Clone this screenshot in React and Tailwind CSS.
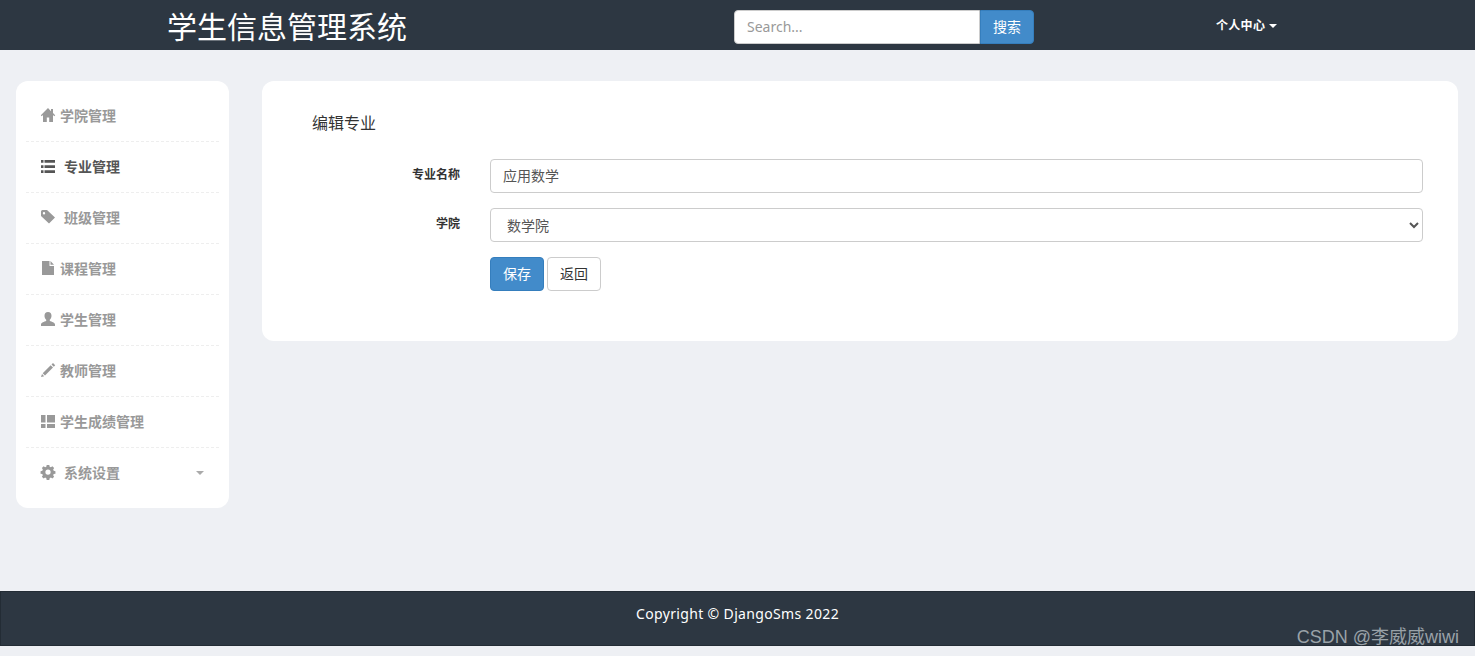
const I = ({ children }) => (
  <svg viewBox="0 1 16 16" className="w-4 h-4 shrink-0" fill="currentColor">{children}</svg>
);
const icons = {
  home: <I><path d="M8 1 .8 8.200l.9 1L3 8.100V15h3.800v-4.500h2.400V15H13V8.100l1.300 1.100.9-1L13 6V2h-2v2.200z" /></I>,
  list: <I><path d="M1 2h2.500v2.700H1zM4.500 2H15v2.700H4.500zM1 7.200h2.500v2.700H1zM4.500 7.200H15v2.700H4.500zM1 12.300h2.500V15H1zM4.500 12.300H15V15H4.500z" /></I>,
  tag: <I><path fillRule="evenodd" d="M2.500 1H7l8 7.500L9 14.500 1 7V2.500A1.500 1.500 0 0 1 2.500 1zM4 3a1.200 1.200 0 1 0 0 2.400A1.200 1.200 0 0 0 4 3z" /></I>,
  file: <I><path d="M2 1h7.500v5H14v9H2zM10.500 1 14 4.800h-3.500z" /></I>,
  user: <I><path d="M8 1c2.300 0 3.500 1.600 3.500 3.800 0 1.600-.7 3.100-1.700 3.900v1.200c2 .8 5.200 1.300 5.200 3.500V15H1v-1.600c0-2.200 3.200-2.700 5.200-3.500V8.700c-1-.8-1.700-2.300-1.700-3.900C4.500 2.600 5.700 1 8 1z" /></I>,
  pencil: <I><path d="M13 1 15.200 3.200 13.800 4.700l-2.300-2.300zM10.700 3.200l2.300 2.300-8 8L2.700 11.200zM2 12l2.200 2.200L1 15z" /></I>,
  layout: <I><path d="M1 2h4.500v7.500H1zM7 2h8v7.500H7zM1 11h4.500v4H1zM7 11h8v4H7z" /></I>,
  gear: <I><path fillRule="evenodd" d="M6.500 0h3l.4 2 1.400.6 1.700-1.100 2 2-1.100 1.700.6 1.400 2 .4v3l-2 .4-.6 1.400 1.100 1.700-2 2-1.700-1.100-1.400.6-.4 2h-3l-.4-2-1.400-.6-1.700 1.100-2-2 1.100-1.700-.6-1.400-2-.4v-3l2-.4.6-1.400-1.100-1.700 2-2 1.700 1.100 1.400-.6zM8 5a3 3 0 1 0 0 6 3 3 0 0 0 0-6z" transform="translate(1 1) scale(.875)" /></I>,
};

const items = [
  ["home", "学院管理", "gap-1", false],
  ["list", "专业管理", "gap-2", true],
  ["tag", "班级管理", "gap-2", false],
  ["file", "课程管理", "gap-1", false],
  ["user", "学生管理", "gap-1", false],
  ["pencil", "教师管理", "gap-1", false],
  ["layout", "学生成绩管理", "gap-1", false],
  ["gear", "系统设置", "gap-2", false],
];

const font = { fontFamily: '"Noto Sans", "Noto Sans CJK SC", sans-serif' };
const mark = { fontFamily: '"Liberation Sans", "Noto Sans CJK SC", sans-serif' };

export default function App() {
  return (
    <div className="relative flex flex-col h-screen bg-[#eef0f4] text-sm text-[#333] overflow-hidden" style={font}>
      <header className="flex items-center h-12.5 bg-[#2d3742] shrink-0">
        <h1 className="w-[734px] pl-41.75 mt-1 text-3xl leading-none text-white">学生信息管理系统</h1>
        <div className="flex w-[300px] h-8.5 mt-1">
          <input
            placeholder="Search..."
            className="flex-1 min-w-0 px-3 bg-white rounded-l border border-[#ccc] text-sm placeholder:text-[#999]"
          />
          <button className="px-3 bg-[#428bca] text-white rounded-r border border-[#357ebd] text-sm">搜索</button>
        </div>
        <div className="flex items-center gap-1 ml-45.5 mt-0.5 text-xs tracking-wide font-bold text-white">
          个人中心
          <span className="border-x-4 border-t-4 border-x-transparent border-t-white" />
        </div>
      </header>

      <main className="flex flex-1 items-start gap-8 pt-[31px] px-4">
        <nav className="w-[213px] shrink-0 px-2.5 py-2.5 bg-white rounded-xl">
          {items.map(([icon, label, gap, active], i) => (
            <div
              key={label}
              className={`flex items-center ${gap} pl-3.5 pr-3.75 font-bold ${active ? "text-[#555]" : "text-[#999]"} ${i < items.length - 1 ? "h-[51px] border-b border-dashed border-[#eee]" : "h-[50px]"}`}
            >
              {icons[icon]}
              <span>{label}</span>
              {icon === "gear" && (
                <span className="ml-auto border-x-4 border-t-4 border-x-transparent border-t-[#aaa]" />
              )}
            </div>
          ))}
        </nav>

        <section className="flex-1 mx-px pt-7 pb-12.5 pl-12.5 pr-8.75 bg-white rounded-xl">
          <h2 className="text-base leading-7 mb-5.5">编辑专业</h2>
          <div className="flex flex-col gap-3.75">
            <div className="flex items-start gap-7.5">
              <label className="w-37 pt-2 text-right text-xs font-bold">专业名称</label>
              <input
                defaultValue="应用数学"
                className="flex-1 h-8.5 px-3 pb-0.5 rounded border border-[#ccc] text-sm text-[#555]"
              />
            </div>
            <div className="flex items-start gap-7.5">
              <label className="w-37 pt-2 text-right text-xs font-bold">学院</label>
              <select className="flex-1 h-8.5 px-3 rounded border border-[#ccc] bg-white text-sm text-[#555]">
                <option>数学院</option>
              </select>
            </div>
            <div className="flex items-start gap-7.5">
              <div className="w-37" />
              <div className="flex gap-0.75">
                <button className="h-8.5 px-3 rounded bg-[#428bca] border border-[#357ebd] text-white text-sm">保存</button>
                <button className="h-8.5 px-3 rounded bg-white border border-[#ccc] text-[#333] text-sm">返回</button>
              </div>
            </div>
          </div>
        </section>
      </main>

      <footer className="flex justify-center h-13.75 pt-3 mb-2.5 shrink-0 bg-[#2d3742] border border-[#232c35] text-white text-sm tracking-wide">
        Copyright © DjangoSms 2022
      </footer>

      <div className="absolute right-4 bottom-2.5 text-lg leading-none text-[#9aa2a8]" style={mark}>CSDN @李威威wiwi</div>
    </div>
  );
}
